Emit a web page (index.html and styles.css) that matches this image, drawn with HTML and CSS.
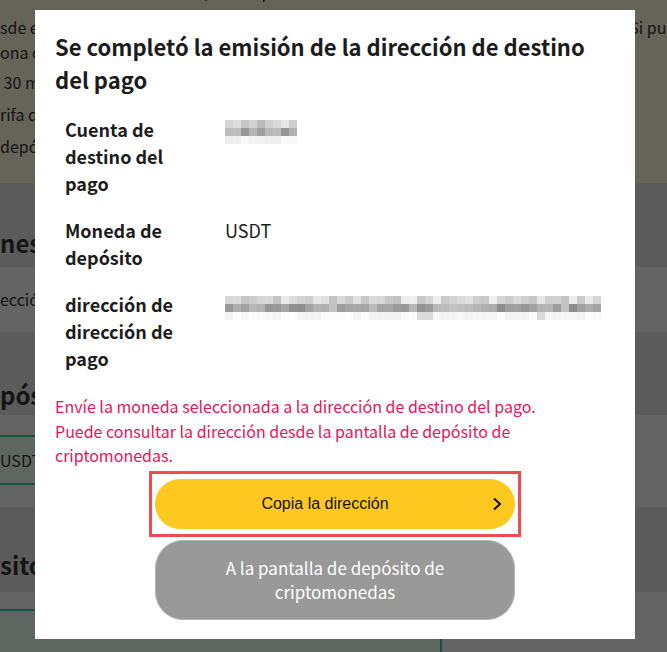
FILE: index.html
```html
<!DOCTYPE html>
<html lang="es">
  <head>
    <meta charset="utf-8">
    <title>Depósito de criptomonedas</title>
    <link rel="stylesheet" href="styles.css">
  </head>
  <body>
    <div class="page">
      <section class="notice">
        <div class="notice__top">dentro de una hora, tras la primera confirmación</div>
        <p class="notice__text">
          <span class="notice__split"><span>sde el momento de la solicitud</span><span class="notice__right">Si puede</span></span>
          <span>ona que realice el depósito</span>
        </p>
        <ul class="notice__list">
          <li>&nbsp;30 minutos aproximadamente</li>
          <li>rifa de depósito</li>
          <li>depósito mínimo</li>
        </ul>
      </section>

      <h2 class="section-title">nes de depósito</h2>
      <div class="section-row">ección de depósito</div>

      <h2 class="section-title section-title--low">pósito</h2>
      <div class="section-table">
        <table>
          <tr>
            <th>USDT</th>
            <td></td>
          </tr>
        </table>
      </div>

      <h2 class="section-title section-title--high">sito</h2>
      <div class="section-table section-table--last">
        <table>
          <tr>
            <th></th>
            <td></td>
          </tr>
        </table>
      </div>
    </div>

    <div class="overlay">
      <div class="modal" role="dialog">
        <h1 class="modal__title">Se completó la emisión de la dirección de destino del pago</h1>
        <dl class="details">
          <dt>Cuenta de destino del pago</dt>
          <dd><div class="mosaic mosaic--short" data-cols="9" data-cells="d5 dc c8 d3 bb d0 d8 e6 cc bb c0 98 b5 9e b8 bd 94 b0 ec f0 f8 f3 f3 ee ee f9 f8"></div></dd>
          <dt>Moneda de depósito</dt>
          <dd>USDT</dd>
          <dt>dirección de dirección de pago</dt>
          <dd><div class="mosaic mosaic--long" data-cols="47" data-seed="7"></div></dd>
        </dl>
        <p class="modal__note">Envíe la moneda seleccionada a la dirección de destino del pago.<br>Puede consultar la dirección desde la pantalla de depósito de criptomonedas.</p>
        <div class="modal__actions">
          <div class="highlight">
            <button class="btn btn--primary">
              Copia la dirección
              <svg class="btn__chevron" width="10" height="14" viewBox="0 0 10 14"><polyline points="2,1.5 8,7 2,12.5" fill="none" stroke="#111" stroke-width="2"/></svg>
            </button>
          </div>
          <button class="btn btn--secondary">A la pantalla de depósito de<br>criptomonedas</button>
        </div>
      </div>
    </div>

    <script src="script.js"></script>
  </body>
</html>
```

FILE: styles.css
```css
body {
  margin: 0;
  overflow: hidden;
  font-family: "Noto Sans CJK JP", "Noto Sans", sans-serif;
  color: #363636;
  background: #e4e4e4;
}

.page {
  width: 667px;
  height: 652px;
  overflow: hidden;
  white-space: nowrap;
}

/* top notice card */
.notice {
  display: flow-root;
  height: 183px;
  background: #fffbdc;
  font-size: 16px;
  line-height: 25px;
}

.notice__top {
  margin-top: -21px;
  padding-left: 62px;
  line-height: 24px;
}

.notice__text {
  margin: 12px 0 0;
}

.notice__text > span {
  display: block;
}

.notice__split {
  display: flex !important;
  justify-content: space-between;
}

.notice__right {
  margin-right: -27px;
}

.notice__list {
  list-style: none;
  margin: 5px 0 0;
  padding: 0;
  display: flex;
  flex-direction: column;
  gap: 7px;
}

/* sections under the card */
.section-title {
  box-sizing: border-box;
  height: 84px;
  margin: 0;
  padding-top: 44px;
  font-size: 24px;
  line-height: 32px;
  font-weight: bold;
  background: #e4e4e4;
}

.section-title--low {
  height: 83px;
  padding-top: 47px;
}

.section-title--high {
  height: 85px;
  padding-top: 42px;
}

.section-row {
  background: #fafafa;
  padding: 20px 0;
  font-size: 16px;
  line-height: 25px;
}

.section-table {
  background: #fafafa;
  padding: 20px 0 22px;
}

.section-table--last {
  padding: 17px 0 0;
  height: 100px;
}

.section-table table {
  width: 600px;
  border-collapse: collapse;
}

.section-table th,
.section-table td {
  height: 46px;
  padding: 0;
  border-top: 2px solid #30d0a0;
  border-bottom: 2px solid #30d0a0;
  font-size: 16px;
  font-weight: normal;
  text-align: left;
}

.section-table th {
  width: 440px;
  background: #e8fff2;
  border-right: 2px solid #30d0a0;
}

.section-table td {
  background: #fafafa;
}

.section-table--last th,
.section-table--last td {
  height: 80px;
}

/* modal */
.overlay {
  position: fixed;
  inset: 0;
  background: rgba(0, 0, 0, .6);
  display: flex;
  justify-content: center;
  align-items: flex-start;
  padding: 10px 0 0 3px;
  box-sizing: border-box;
}

.modal {
  width: 600px;
  box-sizing: border-box;
  padding: 20px 20px 19px;
  background: #fff;
  color: #1c1c1c;
}

.modal__title {
  margin: 0;
  font-size: 22px;
  line-height: 33px;
  font-weight: bold;
}

.details {
  display: grid;
  grid-template-columns: 140px 1fr;
  column-gap: 20px;
  row-gap: 20px;
  margin: 20px 0 0;
  padding-left: 10px;
  font-size: 18px;
  line-height: 27px;
}

.details dt {
  font-weight: bold;
}

.details dd {
  margin: 0;
}

.mosaic {
  display: grid;
  grid-auto-rows: 8px;
  margin-top: 4px;
}

.mosaic--long {
  margin-top: 5px;
}

.modal__note {
  margin: 22px 0 0;
  color: #e8145c;
  font-size: 16px;
  line-height: 24.5px;
}

.modal__actions {
  display: flex;
  flex-direction: column;
  align-items: center;
  margin-top: 3px;
}

.highlight {
  padding: 5px 3px;
  border: 3px solid #ef4b50;
}

.btn {
  display: block;
  width: 360px;
  border: 0;
  cursor: pointer;
}

.btn--primary {
  position: relative;
  height: 50px;
  padding: 0 40px 0 20px;
  border-radius: 25px;
  background: #fdc921;
  color: #111;
  font-family: "Liberation Sans", Arial, sans-serif;
  font-size: 16px;
}

.btn__chevron {
  position: absolute;
  right: 13px;
  top: 18px;
}

.btn--secondary {
  margin-top: 3px;
  padding: 15px;
  border: 1px solid #b3b3b3;
  border-radius: 28px;
  background: #999;
  color: #fff;
  font-family: "Noto Sans CJK JP", "Noto Sans", sans-serif;
  font-size: 17px;
  line-height: 24px;
}
```

FILE: script.js
```js
// pixelated placeholders for hidden account / address values
var blocks = document.querySelectorAll('.mosaic');

for (var i = 0; i < blocks.length; i++) {
  var el = blocks[i];
  var cols = +el.dataset.cols;
  var cells = [];

  if (el.dataset.cells) {
    cells = el.dataset.cells.split(' ').map(function (h) { return parseInt(h, 16); });
  } else {
    var seed = +el.dataset.seed;
    var rand = function () {
      seed = (seed * 9301 + 49297) % 233280;
      return seed / 233280;
    };
    for (var c = 0; c < cols; c++) cells.push(Math.round(192 + rand() * 48));
    for (var c = 0; c < cols; c++) cells.push(Math.round(140 + rand() * 56));
    for (var c = 0; c < cols; c++) {
      var v = Math.round(242 + rand() * 13);
      if (c === 24 || c === 25 || c === 39) v = 218;
      cells.push(v);
    }
  }

  el.style.gridTemplateColumns = 'repeat(' + cols + ', 8px)';
  cells.forEach(function (v) {
    var cell = document.createElement('span');
    cell.style.background = 'rgb(' + v + ',' + v + ',' + v + ')';
    el.appendChild(cell);
  });
}
```
